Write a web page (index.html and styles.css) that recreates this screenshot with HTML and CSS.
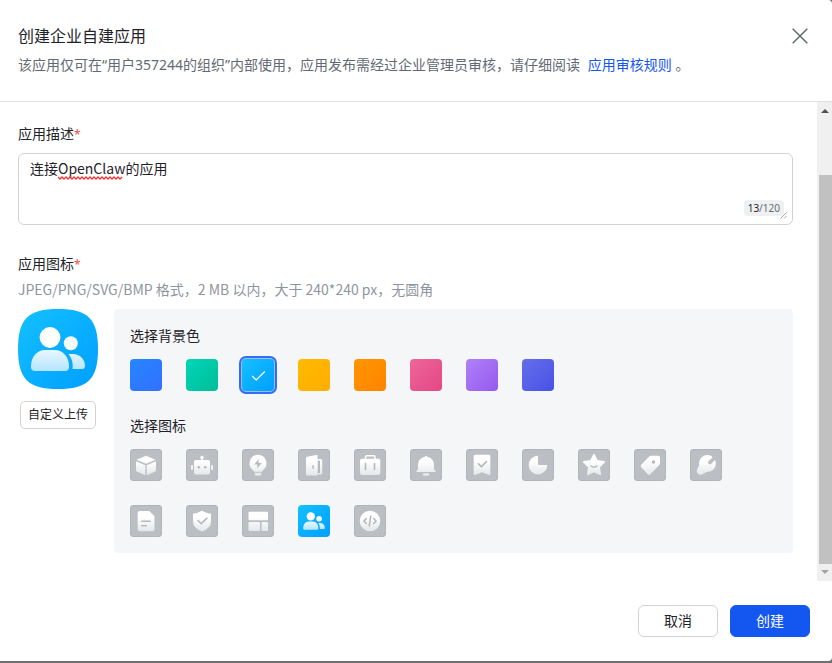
FILE: index.html
```html
<!DOCTYPE html>
<html lang="zh-CN">
<head>
    <meta charset="utf-8">
    <meta name="viewport" content="width=device-width, initial-scale=1">
    <title>创建企业自建应用</title>
    <link rel="stylesheet" href="styles.css">
</head>
<body>
    <!-- shared gradients and the members icon -->
    <svg class="defs" width="0" height="0" aria-hidden="true">
        <defs>
            <linearGradient id="fade" gradientUnits="userSpaceOnUse" x1="0" y1="6" x2="0" y2="27">
                <stop offset="0.3" stop-color="#fff"/>
                <stop offset="1" stop-color="#e3e5e8"/>
            </linearGradient>
            <linearGradient id="fadeBlue" gradientUnits="userSpaceOnUse" x1="0" y1="36" x2="0" y2="62">
                <stop offset="0" stop-color="#f4fbff"/>
                <stop offset="1" stop-color="#b5e5ff"/>
            </linearGradient>
            <linearGradient id="sky" x1="0" y1="0" x2="1" y2="1">
                <stop offset="0" stop-color="#14c0ff"/>
                <stop offset="1" stop-color="#009fff"/>
            </linearGradient>
            <symbol id="members" viewBox="0 0 80 80">
                <circle cx="32" cy="28.5" r="10.4" fill="#fff"/>
                <circle cx="52.8" cy="34.3" r="7" fill="#f4fbff"/>
                <path fill="url(#fadeBlue)" d="M27 41h10c8 0 14 7 14 16v1c0 2.500-1.500 4-4 4H17c-2.500 0-4-1.500-4-4v-1c0-9 6-16 14-16z"/>
                <path fill="url(#fadeBlue)" d="M50.500 45H55c7 0 12 5 12 12 0 2-1 3-3 3H54.500c1-6-1-11-4-15z"/>
            </symbol>
        </defs>
    </svg>

    <div class="dialog">
        <div class="header">
            <div>
                <h1>创建企业自建应用</h1>
                <p>该应用仅可在“用户357244的组织”内部使用，应用发布需经过企业管理员审核，请仔细阅读 <a href="#">应用审核规则</a> 。</p>
            </div>
            <button type="button" class="close" aria-label="关闭">
                <svg width="16" height="16" viewBox="0 0 16 16" fill="none" stroke="#646a73" stroke-width="1.500"><path d="M.7.700l14.600 14.600M15.300.700L.7 15.300"/></svg>
            </button>
        </div>

        <div class="main">
            <form class="content" id="appForm">
                <label class="label" for="desc">应用描述<span class="must">*</span></label>
                <div class="textbox">
                    <textarea id="desc" name="desc" maxlength="120">连接OpenClaw的应用</textarea>
                    <svg class="wave" width="65" height="4" viewBox="0 0 65 4" fill="none" stroke="#f33" stroke-width="1.300"><path d="M0 1l2 2 2-2 2 2 2-2 2 2 2-2 2 2 2-2 2 2 2-2 2 2 2-2 2 2 2-2 2 2 2-2 2 2 2-2 2 2 2-2 2 2 2-2 2 2 2-2 2 2 2-2 2 2 2-2 2 2 2-2 2 2 2-2"/></svg>
                    <span class="count"><b>13</b>/120</span>
                    <svg class="grip" width="7" height="7" viewBox="0 0 7 7" stroke="#a9adb3"><path d="M.5 6.500l6-6M4 6.500L6.500 4"/></svg>
                </div>

                <div class="label icon-label">应用图标<span class="must">*</span></div>
                <p class="hint">JPEG/PNG/SVG/BMP 格式，2 MB 以内，大于 240*240 px，无圆角</p>

                <div class="picker">
                    <div class="preview">
                        <svg width="80" height="80" viewBox="0 0 80 80">
                            <path fill="url(#sky)" d="M40 0C70 0 80 10 80 40S70 80 40 80 0 70 0 40 10 0 40 0z"/>
                            <use href="#members"/>
                        </svg>
                        <button type="button" class="upload">自定义上传</button>
                    </div>

                    <div class="panel">
                        <h2>选择背景色</h2>
                        <div class="row">
                            <label class="color blue"><input type="radio" name="color" aria-label="蓝色"></label>
                            <label class="color green"><input type="radio" name="color" aria-label="绿色"></label>
                            <label class="color sky"><input type="radio" name="color" aria-label="天蓝" checked>
                                <svg width="32" height="32" viewBox="0 0 32 32" fill="none" stroke="#fff" stroke-width="1.200"><path d="M10.200 17l4 4 8.600-8.500"/></svg>
                            </label>
                            <label class="color yellow"><input type="radio" name="color" aria-label="黄色"></label>
                            <label class="color orange"><input type="radio" name="color" aria-label="橙色"></label>
                            <label class="color pink"><input type="radio" name="color" aria-label="粉色"></label>
                            <label class="color purple"><input type="radio" name="color" aria-label="紫色"></label>
                            <label class="color indigo"><input type="radio" name="color" aria-label="靛蓝"></label>
                        </div>

                        <h2>选择图标</h2>
                        <div class="row">
                            <label class="icon"><input type="radio" name="icon" aria-label="立方体">
                                <svg viewBox="0 0 32 32"><path d="M16 6.700l9.500 4.100L16 14.700l-9.500-3.900zM6 12.300l9.300 3.900v10L6.800 22.500q-.8-.4-.8-1.200zM26 12.300l-9.300 3.900v10l8.500-3.700q.8-.4.8-1.200z"/></svg>
                            </label>
                            <label class="icon"><input type="radio" name="icon" aria-label="机器人">
                                <svg viewBox="0 0 32 32"><circle cx="16" cy="8.500" r="1.700"/><path d="M15.300 9h1.400v3h-1.400z"/><rect x="8" y="11" width="16" height="14.500" rx="2"/><rect x="5" y="16" width="2" height="5" rx="1"/><rect x="25" y="16" width="2" height="5" rx="1"/><g class="cut"><circle cx="12.800" cy="18.300" r="1.300"/><circle cx="19.200" cy="18.300" r="1.300"/></g></svg>
                            </label>
                            <label class="icon"><input type="radio" name="icon" aria-label="灯泡">
                                <svg viewBox="0 0 32 32"><path d="M16 5.800a8.500 8.500 0 0 1 5 15.300l-1 1.700h-8l-1-1.700a8.500 8.500 0 0 1 5-15.300z"/><path d="M12.800 23.700h6.400v1.500l-1 1.500h-4.400l-1-1.500z"/><path class="cut" d="M16.800 10l-4.600 5.500h3.300l-.4 4 4.700-5.500h-3.400z"/></svg>
                            </label>
                            <label class="icon"><input type="radio" name="icon" aria-label="门">
                                <svg viewBox="0 0 32 32"><path d="M9 7.800L18.500 6q1-.2 1 .8v19.700H9.300Q8 26.500 8 25.200V9q0-1 1-1.200z"/><path d="M19.500 10h3q1.700 0 1.700 1.700v12.600q0 1.200-1.200 1.200h-3.500z"/><path class="cut" d="M14.300 16.300h1.500v3.500h-1.500zM20 11.500h2V24h-2z"/></svg>
                            </label>
                            <label class="icon"><input type="radio" name="icon" aria-label="公文包">
                                <svg viewBox="0 0 32 32"><rect x="6" y="9.700" width="20.300" height="16.300" rx="2"/><path class="white-line" d="M11.500 10V8q0-1.300 1.300-1.300h7Q21 6.700 21 8v2"/><path class="line" d="M11.500 14.500v6M20.500 14.500v6"/></svg>
                            </label>
                            <label class="icon"><input type="radio" name="icon" aria-label="铃铛">
                                <svg viewBox="0 0 32 32"><path d="M14.700 8a1.400 1.400 0 0 1 2.600 0c4.200.6 6.700 4 6.700 8v5l1.500.4v1.600h-19v-1.600L8 21v-5c0-4 2.500-7.400 6.700-8z"/><rect x="12.800" y="24.200" width="6.400" height="2.500" rx="1"/></svg>
                            </label>
                            <label class="icon"><input type="radio" name="icon" aria-label="书签">
                                <svg viewBox="0 0 32 32"><path d="M9 5.800h14q1.300 0 1.300 1.300v18q0 1.300-1.400.9L16 23.300 9.100 26q-1.400.4-1.400-.9v-18q0-1.300 1.300-1.300z"/><path class="line" d="M12.500 14.800l3 2.800 5-5"/></svg>
                            </label>
                            <label class="icon"><input type="radio" name="icon" aria-label="饼图">
                                <svg viewBox="0 0 32 32"><path d="M16 6.800V15q0 1 1 1h8.300A9.300 9.300 0 1 1 16 6.800z"/></svg>
                            </label>
                            <label class="icon"><input type="radio" name="icon" aria-label="星星">
                                <svg viewBox="0 0 32 32"><path stroke="url(#fade)" stroke-width="2" stroke-linejoin="round" d="M16 6l2.900 6 7.100 1-5.100 5 1.200 7.200L16 22.400l-6.100 2.800 1.200-7.200L6 13l7.100-1z"/><path class="line" d="M13 17q3 2.500 6 0"/></svg>
                            </label>
                            <label class="icon"><input type="radio" name="icon" aria-label="标签">
                                <svg viewBox="0 0 32 32"><path d="M17 6.800h7q2 0 2 2v5.400q0 1-.8 1.800l-9 9.500q-1.200 1-2.200 0l-7-7.500q-.8-1 0-1.900l8.300-8.500q.7-.8 1.700-.8z"/><circle class="cut" cx="19.500" cy="13" r="1.700"/></svg>
                            </label>
                            <label class="icon"><input type="radio" name="icon" aria-label="扳手">
                                <svg viewBox="0 0 32 32"><circle cx="17.400" cy="14.500" r="8.500"/><path d="M9 16.500l-2 4.300a3.800 3.800 0 0 0 5.600 4.500l5.400-3z"/><path class="notch" d="M21 5l1.300 3.700L18.600 12a1.900 1.900 0 0 0 2.700 2.700L25 11l3 .5L27 4z"/></svg>
                            </label>
                            <label class="icon"><input type="radio" name="icon" aria-label="文档">
                                <svg viewBox="0 0 32 32"><path d="M9.500 6h9.700l5.300 5.300v13.200q0 1.800-1.800 1.800H9.500q-1.800 0-1.800-1.800V7.800Q7.700 6 9.500 6z"/><path class="line" d="M11.700 16.200h8.600M11.700 20.700h4.600"/></svg>
                            </label>
                            <label class="icon"><input type="radio" name="icon" aria-label="盾牌">
                                <svg viewBox="0 0 32 32"><path d="M16 5.700q4.500 2.500 9 3v7.600q0 7-9 10.200-9-3.200-9-10.200V8.700q4.500-.5 9-3z"/><path class="line" d="M12 15.500l3.300 3.200 5.700-5.500"/></svg>
                            </label>
                            <label class="icon"><input type="radio" name="icon" aria-label="布局">
                                <svg viewBox="0 0 32 32"><rect x="6.500" y="6.800" width="19.500" height="8.500" rx="1"/><rect x="6.500" y="17" width="11.500" height="9" rx="1"/><rect x="19.500" y="17" width="6.500" height="9" rx="1"/></svg>
                            </label>
                            <label class="icon active"><input type="radio" name="icon" aria-label="成员" checked>
                                <svg viewBox="0 0 80 80"><use href="#members"/></svg>
                            </label>
                            <label class="icon"><input type="radio" name="icon" aria-label="代码">
                                <svg viewBox="0 0 32 32"><circle cx="16" cy="16" r="10.300"/><path class="line" d="M12.300 13.500L10 16l2.300 2.500M19.700 13.500L22 16l-2.300 2.500M16.700 11l-1.400 10"/></svg>
                            </label>
                        </div>
                    </div>
                </div>
            </form>
            <div class="scrollbar" aria-hidden="true">
                <i class="arrow up"></i>
                <i class="thumb"></i>
                <i class="arrow down"></i>
            </div>
        </div>

        <div class="footer">
            <button type="button">取消</button>
            <button type="submit" form="appForm" class="primary">创建</button>
        </div>
    </div>
</body>
</html>
```
FILE: styles.css
```css
*{
    box-sizing: border-box;
    margin: 0;
    padding: 0;
}
body{
    background: #707070;
    color: #1f2329;
    font: 14px/22px "Noto Sans", "Noto Sans CJK SC", sans-serif;
}
.defs{
    position: absolute;
}
button, textarea{
    font: inherit;
    color: inherit;
}
svg{
    display: block;
}
.dialog{
    display: flex;
    flex-direction: column;
    min-height: calc(100vh - 2px);
    background: #fff;
    border-radius: 0 4px 4px 0;
}

/* header */
.header{
    display: flex;
    justify-content: space-between;
    padding: 24px 24px 25px 18px;
    border-bottom: 1px solid #dee0e3;
}
h1{
    font-size: 16px;
    line-height: 24px;
    font-weight: normal;
}
.header p{
    margin-top: 6px;
    color: #646a73;
}
.header a{
    margin: 0 0 0 4px;
    color: #1456f0;
    text-decoration: none;
}
.close{
    align-self: flex-start;
    margin-top: 4px;
    border: none;
    background: none;
}

/* form */
.main{
    display: flex;
    flex: 1;
}
.content{
    flex: 1;
    padding: 21px 24px 27px 18px;
}
.label{
    display: block;
}
.must{
    color: #f54a45;
    font-size: 12px;
    line-height: 1;
}
.textbox{
    position: relative;
    height: 72px;
    margin-top: 8px;
    border: 1px solid #d0d3d6;
    border-radius: 6px;
}
textarea{
    display: block;
    width: 100%;
    height: 100%;
    padding: 3px 11px;
    border: none;
    outline: none;
    background: none;
    font-family: "Noto Sans CJK SC", sans-serif;
    resize: none;
}
.wave{
    position: absolute;
    left: 39px;
    top: 22px;
}
.count{
    position: absolute;
    right: 8px;
    bottom: 8px;
    padding: 0 4px;
    border-radius: 4px;
    background: #eff0f1;
    color: #646a73;
    font-size: 10px;
    line-height: 16px;
}
.count b{
    color: #1f2329;
    font-weight: normal;
}
.grip{
    position: absolute;
    right: 5px;
    bottom: 5px;
}
.icon-label{
    margin-top: 28px;
}
.hint{
    margin-top: 3px;
    color: #8f959e;
    font-family: "Noto Sans CJK SC", sans-serif;
}
.picker{
    display: flex;
    gap: 16px;
    margin-top: 9px;
}
.preview{
    width: 80px;
}
.upload{
    display: block;
    width: 76px;
    height: 28px;
    margin: 12px auto 0;
    border: 1px solid #d0d3d6;
    border-radius: 5px;
    background: #fff;
    font-size: 12px;
    line-height: 20px;
}
.panel{
    flex: 1;
    padding: 16px;
    border-radius: 4px;
    background: #f5f6f8;
}
h2{
    font-size: 14px;
    font-weight: normal;
}
.row{
    display: flex;
    flex-wrap: wrap;
    gap: 24px;
    margin-top: 12px;
}
.row + h2{
    margin-top: 24px;
}
.color, .icon{
    position: relative;
    width: 32px;
    height: 32px;
    border-radius: 4px;
    cursor: pointer;
}
.color input, .icon input{
    position: absolute;
    width: 32px;
    height: 32px;
    appearance: none;
    cursor: pointer;
}
.blue{background: linear-gradient(135deg, #2586ff, #3370ff);}
.green{background: linear-gradient(135deg, #00d6b9, #00bd96);}
.sky{
    background: linear-gradient(135deg, #14c0ff, #009fff);
    box-shadow: 0 0 0 1px #9fbcf8, 0 0 0 3px #336df4;
}
.yellow{background: linear-gradient(135deg, #ffba00, #ffad00);}
.orange{background: linear-gradient(135deg, #ff9500, #ff8500);}
.pink{background: linear-gradient(135deg, #ed6699, #e54785);}
.purple{background: linear-gradient(135deg, #af81f9, #9659ee);}
.indigo{background: linear-gradient(135deg, #666eea, #4752e6);}
.icon{
    background: #bbbfc4;
    box-shadow: inset 0 0 0 1px #b1b5ba;
}
.icon svg{
    width: 32px;
    height: 32px;
    fill: url(#fade);
}
.icon .cut{
    fill: #b5b9be;
}
.icon .line{
    fill: none;
    stroke: #b5b9be;
    stroke-width: 1.6;
    stroke-linecap: round;
}
.icon .white-line{
    fill: none;
    stroke: #fff;
    stroke-width: 1.5;
}
.icon .notch{
    fill: #bbbfc4;
}
.icon.active{
    background: linear-gradient(135deg, #14c0ff, #009fff);
    box-shadow: none;
}

/* scrollbar */
.scrollbar{
    display: flex;
    flex-direction: column;
    justify-content: space-between;
    width: 15px;
    padding: 7px 0;
    background: #f0f0f0;
}
.arrow{
    margin-left: 4px;
    width: 0;
    border: 4px solid transparent;
}
.up{
    border-top: none;
    border-bottom-color: #505050;
}
.down{
    border-bottom: none;
    border-top-color: #a3a3a3;
}
.thumb{
    flex: 1;
    margin: 62px 0 6px 2px;
    background: #c1c1c1;
}

/* footer */
.footer{
    display: flex;
    justify-content: flex-end;
    gap: 12px;
    padding: 24px 22px;
}
.footer button{
    width: 80px;
    height: 32px;
    border: 1px solid #d0d3d6;
    border-radius: 6px;
    background: #fff;
}
.footer .primary{
    border-color: #1456f0;
    background: #1456f0;
    color: #fff;
}
```
